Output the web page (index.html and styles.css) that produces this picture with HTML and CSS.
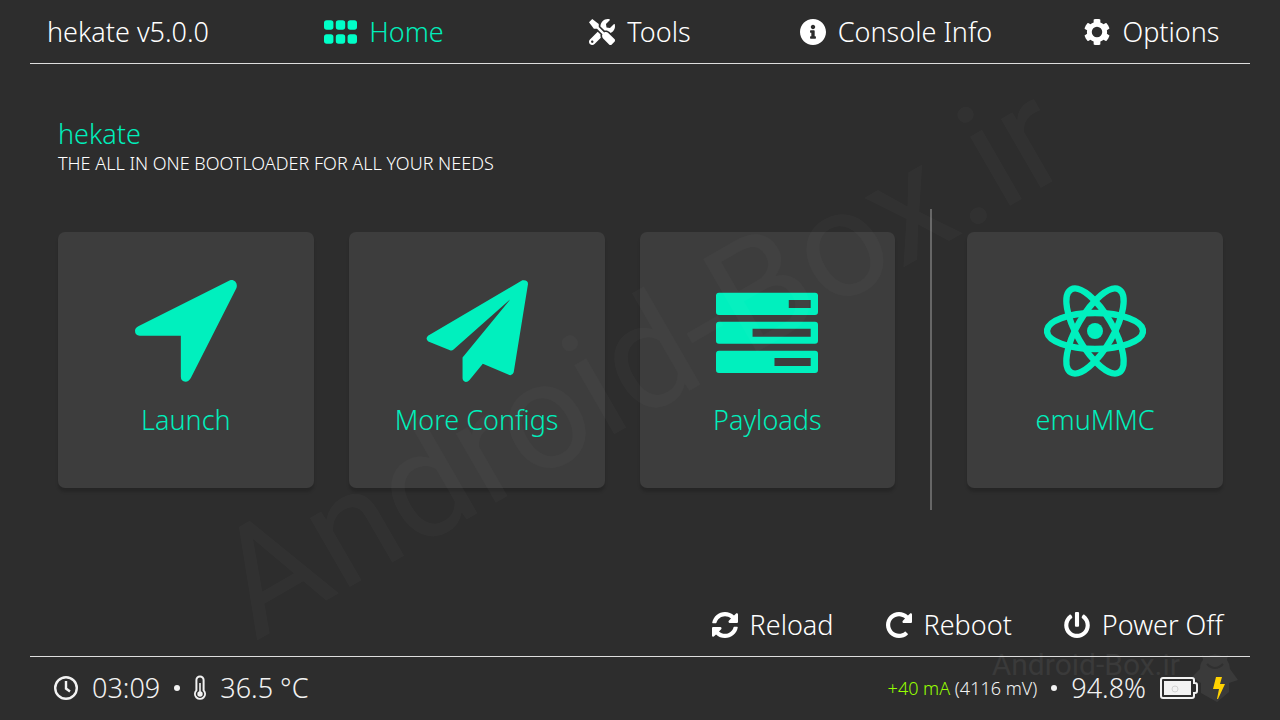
FILE: index.html
```html
<!DOCTYPE html>
<html lang="en">
<head>
<meta charset="utf-8">
<title>hekate</title>
<meta name="viewport" content="width=device-width, initial-scale=1">
<link rel="stylesheet" href="styles.css">
</head>
<body>
<header class="topbar">
  <div class="brand">hekate v5.0.0</div>
  <nav class="tabs" aria-label="Sections">
    <button class="tab active" type="button">
      <svg class="icon-grid" viewBox="0 0 98 70" aria-hidden="true"><rect width="28" height="28" rx="8"/><rect x="35" width="28" height="28" rx="8"/><rect x="70" width="28" height="28" rx="8"/><rect y="42" width="28" height="28" rx="8"/><rect x="35" y="42" width="28" height="28" rx="8"/><rect x="70" y="42" width="28" height="28" rx="8"/></svg>
      <span>Home</span>
    </button>
    <button class="tab" type="button">
      <svg class="icon" viewBox="0 0 512 512" aria-hidden="true"><path d="M501.1 395.7L384 278.6c-23.1-23.1-57.6-27.6-85.4-13.9L192 158.1V96L64 0 0 64l96 128h62.1l106.6 106.6c-13.6 27.8-9.2 62.3 13.9 85.4l117.1 117.1c14.6 14.6 38.2 14.6 52.7 0l52.7-52.7c14.5-14.6 14.5-38.2 0-52.7zM331.7 225c28.3 0 54.9 11 74.9 31l19.4 19.4c15.8-6.9 30.8-16.5 43.8-29.5 37.1-37.1 49.7-89.3 37.9-136.7-2.2-9-13.5-12.1-20.1-5.5l-74.4 74.4-67.9-11.3L334 98.9l74.4-74.4c6.6-6.6 3.4-17.9-5.7-20.2-47.4-11.7-99.6.9-136.6 37.9-28.5 28.5-41.9 66.1-41.2 103.6l82.1 82.1c8.1-1.9 16.5-2.9 24.7-2.9zm-103.9 82l-56.7-56.7L18.7 402.8c-25 25-25 65.5 0 90.5s65.5 25 90.5 0l123.6-123.6c-7.6-19.9-9.9-41.6-5-62.7zM64 472c-13.2 0-24-10.8-24-24 0-13.3 10.7-24 24-24s24 10.7 24 24c0 13.2-10.7 24-24 24z"/></svg>
      <span>Tools</span>
    </button>
    <button class="tab" type="button">
      <svg class="icon" viewBox="8 8 496 496" aria-hidden="true"><path d="M256 8C119.043 8 8 119.083 8 256c0 136.997 111.043 248 248 248s248-111.003 248-248C504 119.083 392.957 8 256 8zm0 110c23.196 0 42 18.804 42 42s-18.804 42-42 42-42-18.804-42-42 18.804-42 42-42zm56 254c0 6.627-5.373 12-12 12h-88c-6.627 0-12-5.373-12-12v-24c0-6.627 5.373-12 12-12h12v-64h-12c-6.627 0-12-5.373-12-12v-24c0-6.627 5.373-12 12-12h64c6.627 0 12 5.373 12 12v100h12c6.627 0 12 5.373 12 12v24z"/></svg>
      <span>Console Info</span>
    </button>
    <button class="tab" type="button">
      <svg class="icon" viewBox="8 8 496 496" aria-hidden="true"><path d="M487.4 315.7l-42.6-24.6c4.3-23.2 4.3-47 0-70.2l42.6-24.6c4.9-2.8 7.1-8.6 5.5-14-11.1-35.6-30-67.8-54.7-94.6-3.8-4.1-10-5.1-14.8-2.3L380.8 110c-17.9-15.4-38.5-27.3-60.8-35.1V25.8c0-5.6-3.9-10.5-9.4-11.7-36.7-8.2-74.3-7.8-109.2 0-5.5 1.2-9.4 6.1-9.4 11.7V75c-22.2 7.9-42.8 19.8-60.8 35.1L88.7 85.5c-4.9-2.8-11-1.9-14.8 2.3-24.7 26.7-43.6 58.9-54.7 94.6-1.7 5.4.6 11.2 5.5 14L67.3 221c-4.3 23.2-4.3 47 0 70.2l-42.6 24.6c-4.9 2.8-7.1 8.6-5.5 14 11.1 35.6 30 67.8 54.7 94.6 3.8 4.1 10 5.1 14.8 2.3l42.6-24.6c17.9 15.4 38.5 27.3 60.8 35.1v49.2c0 5.6 3.9 10.5 9.4 11.7 36.7 8.2 74.3 7.8 109.2 0 5.5-1.2 9.4-6.1 9.4-11.7v-49.2c22.2-7.9 42.8-19.8 60.8-35.1l42.6 24.6c4.9 2.8 11 1.9 14.8-2.3 24.7-26.7 43.6-58.9 54.7-94.6 1.5-5.5-.7-11.3-5.6-14.1zM256 356a100 100 0 1 1 0-200 100 100 0 0 1 0 200z" fill-rule="evenodd"/></svg>
      <span>Options</span>
    </button>
  </nav>
</header>

<main class="home">
  <h1 class="title">hekate</h1>
  <p class="subtitle">THE ALL IN ONE BOOTLOADER FOR ALL YOUR NEEDS</p>
  <div class="tiles">
    <button class="tile" type="button">
      <svg class="tile-icon" viewBox="0 0 307 307" aria-hidden="true"><path d="M286 1C298-3 311 9 305 25L168 295Q162 306 152 306Q138 305 138 291V168H14Q0 167 0 153Q0 144 10 139Z"/></svg>
      <span>Launch</span>
    </button>
    <button class="tile" type="button">
      <svg class="tile-icon" viewBox="0 0 307 307" aria-hidden="true"><path d="M290 1Q307-1 307 12L264 278Q261 288 251 286L171 252L131 301Q126 307 120 307Q111 306 110 296V233L254 58L83 209Q79 213 74 212L7 185Q-3 177 6 168Z"/></svg>
      <span>More Configs</span>
    </button>
    <button class="tile" type="button">
      <svg class="tile-icon" viewBox="0 -38 307 307" aria-hidden="true"><path fill-rule="evenodd" d="M9 0H298Q307 0 307 9V58Q307 67 298 67H9Q0 67 0 58V9Q0 0 9 0ZM219 22V46H285V22ZM9 88H298Q307 88 307 97V145Q307 154 298 154H9Q0 154 0 145V97Q0 88 9 88ZM110 109V133H285V109ZM9 175H298Q307 175 307 184V233Q307 242 298 242H9Q0 242 0 233V184Q0 175 9 175ZM176 197V221H285V197Z"/></svg>
      <span>Payloads</span>
    </button>
    <div class="divider" role="separator"></div>
    <button class="tile" type="button">
      <svg class="tile-icon" viewBox="-153 -153 306 306" aria-hidden="true"><circle r="24"/><g fill="none" stroke="currentColor" stroke-width="19"><ellipse rx="144" ry="54"/><ellipse rx="144" ry="54" transform="rotate(60)"/><ellipse rx="144" ry="54" transform="rotate(120)"/></g></svg>
      <span>emuMMC</span>
    </button>
  </div>
</main>

<div class="actions">
  <button class="action" type="button">
    <svg class="icon" viewBox="8 8 496 496" aria-hidden="true"><path d="M370.72 133.28C339.458 104.008 298.888 87.962 255.848 88c-77.458.068-144.328 53.178-162.791 126.85-1.344 5.363-6.122 9.15-11.651 9.15H24.103c-7.498 0-13.194-6.807-11.807-14.176C33.933 94.924 134.813 8 256 8c66.448 0 126.791 26.136 171.315 68.685L463.03 40.97C478.149 25.851 504 36.559 504 57.941V192c0 13.255-10.745 24-24 24H345.941c-21.382 0-32.09-25.851-16.971-40.971l41.75-41.749zM32 296h134.059c21.382 0 32.09 25.851 16.971 40.971l-41.75 41.75c31.262 29.273 71.835 45.319 114.876 45.28 77.418-.07 144.315-53.144 162.787-126.849 1.344-5.363 6.122-9.15 11.651-9.15h57.304c7.498 0 13.194 6.807 11.807 14.176C478.067 417.076 377.187 504 256 504c-66.448 0-126.791-26.136-171.315-68.685L48.97 471.03C33.851 486.149 8 475.441 8 454.059V320c0-13.255 10.745-24 24-24z"/></svg>
    <span>Reload</span>
  </button>
  <button class="action" type="button">
    <svg class="icon" viewBox="8 8 496 496" aria-hidden="true"><path d="M256.455 8c66.269.119 126.437 26.233 170.859 68.685l35.715-35.715C478.149 25.851 504 36.559 504 57.941V192c0 13.255-10.745 24-24 24H345.941c-21.382 0-32.09-25.851-16.971-40.971l41.75-41.75c-30.864-28.899-70.801-44.907-113.23-45.273-92.398-.798-170.283 73.977-169.484 169.442C88.764 348.009 162.184 424 256 424c41.127 0 79.997-14.678 110.629-41.556 4.743-4.161 11.906-3.908 16.368.553l39.662 39.662c4.872 4.872 4.631 12.815-.482 17.433C378.202 479.813 319.926 504 256 504 119.034 504 8.001 392.967 8 256.002 7.999 119.193 119.646 7.755 256.455 8z"/></svg>
    <span>Reboot</span>
  </button>
  <button class="action" type="button">
    <svg class="icon" viewBox="4 0 504 504" aria-hidden="true"><path d="M400 54.1c63 45 104 118.6 104 201.9 0 136.8-110.8 247.7-247.5 248C120 504.3 8.2 393 8 256.4 7.9 173.1 48.9 99.3 111.8 54.2c11.7-8.3 28-4.8 35 7.7L162.6 90c5.9 10.5 3.1 23.8-6.6 31-41.5 30.8-68 79.6-68 134.9-.1 92.3 74.5 168.1 168 168.1 91.6 0 168.6-74.2 168-169.1-.3-51.8-24.7-101.8-68.1-134-9.7-7.2-12.4-20.5-6.5-30.9l15.8-28.1c7-12.4 23.2-16.1 34.8-7.8zM296 264V24c0-13.3-10.7-24-24-24h-32c-13.3 0-24 10.7-24 24v240c0 13.3 10.7 24 24 24h32c13.3 0 24-10.7 24-24z"/></svg>
    <span>Power Off</span>
  </button>
</div>

<footer class="status">
  <div class="status-group">
    <svg class="icon-clock" viewBox="0 0 24 24" aria-hidden="true"><g fill="none" stroke="currentColor" stroke-width="2.4"><circle cx="12" cy="12" r="10.8"/><path d="M12 5V12.6L16 15.4"/></g></svg>
    <span>03:09</span>
    <span class="dot"></span>
    <svg class="icon-thermo" viewBox="0 0 12 26" aria-hidden="true"><path d="M2.4 5a3.6 3.6 0 0 1 7.2 0V15.4a5 5 0 1 1-7.2 0Z" fill="none" stroke="currentColor" stroke-width="2"/><path d="M6 8V19" stroke="currentColor" stroke-width="1.6"/><circle cx="6" cy="19" r="2.7"/></svg>
    <span>36.5 °C</span>
  </div>
  <div class="status-group">
    <span class="small"><span class="current">+40 mA</span> (4116 mV)</span>
    <span class="dot"></span>
    <span>94.8%</span>
    <svg class="icon-battery" viewBox="0 0 38 22" aria-hidden="true"><path d="M3 1H32Q34 1 34 3V6H35Q37 6 37 8V14Q37 16 35 16H34V19Q34 21 32 21H3Q1 21 1 19V3Q1 1 3 1Z" fill="none" stroke="currentColor" stroke-width="2"/><rect x="4" y="4" width="27" height="14"/><circle cx="15" cy="12" r="3" fill="none" stroke="#d2d2d2"/></svg>
    <svg class="icon-bolt" viewBox="0 0 14 22" aria-hidden="true"><path d="M4 0H10L8 7H13L6 22H5L7 12H1Z"/></svg>
  </div>
</footer>

<div class="watermark" aria-hidden="true">Android-Box.ir</div>
<div class="stamp" aria-hidden="true">
  <span>Android-Box.ir</span>
  <svg class="mascot" viewBox="0 0 46 50"><path d="M10 3L14 5Q23 0 32 5L36 3L35 8Q38 12 38 17L46 28L37 31V40L25 50L9 41V31L0 25L8 17Q8 11 11 8Z"/><path d="M15 12Q23 20 31 12" fill="none" stroke="#303030" stroke-width="2"/></svg>
</div>
</body>
</html>
```
FILE: styles.css
```css
* {
  box-sizing: border-box;
}

body {
  position: relative;
  display: flex;
  flex-direction: column;
  min-height: 100vh;
  margin: 0;
  overflow-x: hidden;
  background: #2d2d2d;
  color: #fff;
  font-family: "Noto Sans", "Open Sans", sans-serif;
  font-size: 27px;
  font-weight: 300;
  line-height: 36px;
}

button {
  padding: 0;
  border: 0;
  background: none;
  color: inherit;
  font: inherit;
  cursor: pointer;
}

svg {
  flex: none;
  fill: currentColor;
}

/* Top navigation */
.topbar {
  display: grid;
  grid-template-columns: 1fr 4fr;
  align-items: center;
  height: 64px;
  padding-bottom: 1px;
  background: linear-gradient(#dedede, #dedede) center bottom / calc(100% - 60px) 1px no-repeat;
}

.brand {
  text-align: center;
}

.tabs {
  display: grid;
  grid-template-columns: repeat(4, 1fr);
}

.tab,
.action {
  display: flex;
  align-items: center;
  justify-content: center;
  gap: 12px;
  white-space: nowrap;
}

.active {
  color: #00eebb;
}

.icon {
  width: 26px;
  height: 26px;
}

.icon-grid {
  width: 33px;
  height: 24px;
  color: #00ffc8;
}

/* Home */
.home {
  padding: 52px 57px 0 58px;
}

.title {
  margin: 0;
  color: #00eebb;
  font-size: 27px;
  font-weight: 300;
}

.subtitle {
  margin: 0 0 58px;
  font-size: 18px;
  line-height: 22px;
}

.tiles {
  display: grid;
  grid-template-columns: repeat(3, 1fr) 2px 1fr;
  gap: 35px;
}

.tile {
  display: flex;
  flex-direction: column;
  align-items: center;
  gap: 20px;
  padding: 48px 12px 50px;
  border-radius: 7px;
  background: #3d3d3d;
  box-shadow: 0 4px 3px rgba(0, 0, 0, 0.16);
  color: #00eebb;
}

.tile-icon {
  width: 102px;
  height: 102px;
  color: #00f0be;
}

.divider {
  margin: -23px 0 -22px;
  background: #666;
}

/* Power actions */
.actions {
  display: flex;
  justify-content: flex-end;
  gap: 52px;
  margin-top: auto;
  padding: 24px 57px 13px;
}

/* Status bar */
.status {
  display: flex;
  align-items: center;
  justify-content: space-between;
  height: 64px;
  padding: 0 54px;
  background: linear-gradient(#dedede, #dedede) center top / calc(100% - 60px) 1px no-repeat;
}

.status-group {
  display: flex;
  align-items: center;
  gap: 14px;
  color: #f2f2f2;
}

.small {
  font-size: 18px;
}

.current {
  color: #96ff00;
}

.dot {
  width: 6px;
  height: 6px;
  border-radius: 50%;
  background: currentColor;
}

.icon-clock {
  width: 24px;
  height: 24px;
}

.icon-thermo {
  width: 12px;
  height: 26px;
}

.icon-battery {
  width: 38px;
  height: 22px;
}

.icon-bolt {
  width: 14px;
  height: 22px;
  color: #ffd200;
}

/* Watermarks over the page */
.watermark,
.stamp {
  position: absolute;
  font-family: Roboto, sans-serif;
  font-weight: 400;
  white-space: nowrap;
  pointer-events: none;
}

.watermark {
  top: 50%;
  left: 50%;
  color: rgba(255, 255, 255, 0.025);
  font-size: 151px;
  line-height: 1;
  transform: translate(-50%, -50%) rotate(-30deg);
}

.stamp {
  right: 42px;
  bottom: 18px;
  z-index: -1;
  display: flex;
  align-items: flex-start;
  gap: 12px;
  color: #3a3a3a;
  font-size: 30px;
  line-height: 26px;
}

.mascot {
  width: 46px;
  height: 50px;
}
```
